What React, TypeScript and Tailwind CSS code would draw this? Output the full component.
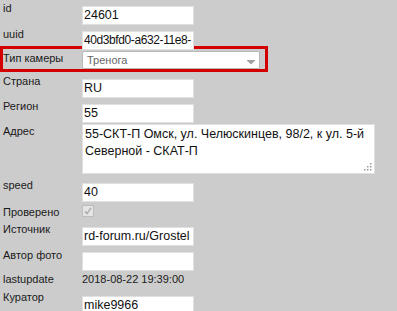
import type { ReactNode } from "react";

const font = { fontFamily: "'Liberation Sans', Arial, sans-serif" };

function Label({ children, className = "" }: { children: ReactNode; className?: string }) {
  return (
    <div className={`w-[79px] shrink-0 text-[11px] leading-[13px] text-[#1a1a1a] ${className}`}>
      {children}
    </div>
  );
}

function Field({ value, tight = false }: { value: string; tight?: boolean }) {
  return (
    <input
      readOnly
      value={value}
      className={`w-[112px] h-[19px] bg-white border border-[#e0e0e0] px-[1px] leading-[15px] text-[#111] outline-none ${
        tight ? "text-[12px] tracking-[-0.4px]" : "text-[12.5px]"
      }`}
    />
  );
}

function Row({
  label,
  value,
  h,
  pt,
  lpt,
  tight,
}: {
  label: string;
  value: string;
  h: string;
  pt: string;
  lpt: string;
  tight?: boolean;
}) {
  return (
    <div className={`flex pl-[3px] ${h}`}>
      <Label className={lpt}>{label}</Label>
      <div className={pt}>
        <Field value={value} tight={tight} />
      </div>
    </div>
  );
}

export default function App() {
  return (
    <div className="w-[397px] h-[311px] overflow-hidden bg-[#cccccc]" style={font}>
      <Row label="id" value="24601" h="h-[25px]" pt="pt-[2px]" lpt="pt-[2px]" />
      <Row label="uuid" value="40d3bfd0-a632-11e8-" h="h-[21px]" pt="pt-[2px]" lpt="pt-[3px]" tight />

      {/* highlighted select row */}
      <div className="flex w-[268px] h-[26px] border-[3px] border-[#d40000]">
        <Label className="pt-[3px]">Тип камеры</Label>
        <div className="pt-[2px]">
          <div className="relative w-[178px] h-[18px] bg-white border border-[#b8b8b8] rounded-[2px] pl-[4px] text-[11px] leading-[17px] text-[#666]">
            Тренога
            <svg className="absolute right-[4px] top-[8px]" width="8" height="5" viewBox="0 0 8 5">
              <rect x="0" y="0" width="8" height="1" fill="#a0a0a0" />
              <polygon points="0.5,1 7.5,1 4,4.5" fill="#a0a0a0" />
            </svg>
          </div>
        </div>
      </div>

      <Row label="Страна" value="RU" h="h-[25px]" pt="pt-[3px]" lpt="pt-[3px]" />
      <Row label="Регион" value="55" h="h-[25px]" pt="pt-[3px]" lpt="pt-[3px]" />

      <div className="flex pl-[3px] h-[55px]">
        <Label className="pt-[3px]">Адрес</Label>
        <div className="pt-[2px]">
          <div className="relative w-[293px] h-[50px] bg-white border border-[#e0e0e0] px-[2px] pt-[1px] text-[12.5px] leading-[17px] text-[#111]">
            55-СКТ-П Омск, ул. Челюскинцев, 98/2, к ул. 5-й Северной - СКАТ-П
            <svg className="absolute right-[2px] bottom-[2px]" width="8" height="8" viewBox="0 0 8 8">
              <rect x="6" y="0" width="1.5" height="1.5" fill="#9a9a9a" />
              <rect x="3" y="3" width="1.5" height="1.5" fill="#9a9a9a" />
              <rect x="6" y="3" width="1.5" height="1.5" fill="#9a9a9a" />
              <rect x="0" y="6" width="1.5" height="1.5" fill="#9a9a9a" />
              <rect x="3" y="6" width="1.5" height="1.5" fill="#9a9a9a" />
              <rect x="6" y="6" width="1.5" height="1.5" fill="#9a9a9a" />
            </svg>
          </div>
        </div>
      </div>

      <Row label="speed" value="40" h="h-[25px]" pt="pt-[2px]" lpt="pt-[2px]" />

      <div className="flex pl-[3px] h-[19px]">
        <Label className="pt-[4px]">Проверено</Label>
        <div className="pt-[3px]">
          <svg width="12" height="12" viewBox="0 0 12 12">
            <rect x="0.5" y="0.5" width="11" height="11" fill="#e4e4e4" stroke="#bdbdbd" />
            <path d="M3 6.2 L5 8.6 L9 2.8" fill="none" stroke="#a8a8a8" strokeWidth="1.4" />
          </svg>
        </div>
      </div>

      <Row label="Источник" value="rd-forum.ru/Grostel" h="h-[25px]" pt="pt-[2px]" lpt="pt-[2px]" />
      <Row label="Автор фото" value="" h="h-[25px]" pt="pt-[2px]" lpt="pt-[3px]" />

      <div className="flex pl-[3px] h-[19px]">
        <Label className="pt-[2px]">lastupdate</Label>
        <div className="pt-[2px] text-[11px] leading-[13px] text-[#1a1a1a]">2018-08-22 19:39:00</div>
      </div>

      <Row label="Куратор" value="mike9966" h="h-[25px]" pt="pt-[2px]" lpt="pt-[1px]" />
    </div>
  );
}
